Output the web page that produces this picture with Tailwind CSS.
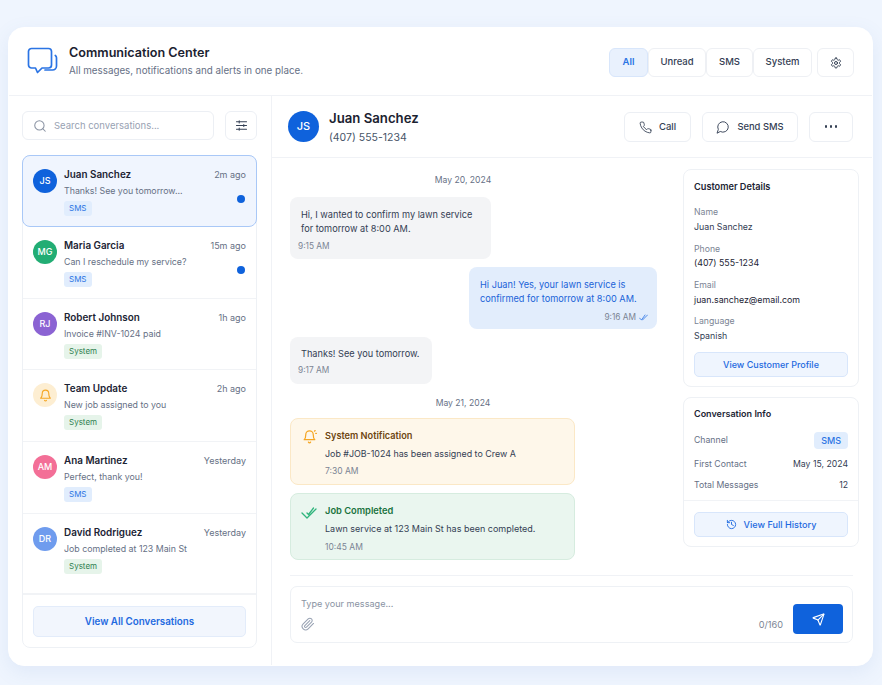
<!DOCTYPE html>
<html lang="en">
<head>
  <meta charset="UTF-8" />
  <meta name="viewport" content="width=device-width, initial-scale=1" />
  <title>Communication Center</title>
  <script src="https://cdn.jsdelivr.net/npm/@tailwindcss/browser@4"></script>
</head>
<body class="bg-[#eff5fe] font-['Inter',sans-serif] text-[#1c2434]">
<div class="w-[882px] h-[685px] pt-[27px] pl-[8px] overflow-hidden">
  <div class="w-[865px] h-[639px] bg-white rounded-[16px] border border-white shadow-[0_6px_20px_rgba(90,130,200,0.10)] flex flex-col overflow-hidden">

    <!-- Header -->
    <header class="h-[68px] shrink-0 border-b border-[#f0f2f6] flex items-center pl-[18px] pr-[18px]">
      <svg class="w-[32px] h-[30px] text-[#2b74e4]" viewBox="0 0 32 30" fill="none" stroke="currentColor" stroke-width="1.7" stroke-linecap="round" stroke-linejoin="round">
        <path d="M4.500 1.500h17a3 3 0 0 1 3 3v13.500a3 3 0 0 1-3 3H15l-4.500 4.500-2-4.500h-4a3 3 0 0 1-3-3V4.500a3 3 0 0 1 3-3z" />
        <path d="M28.300 8.500c.8.500 1.200 1.300 1.200 2.300v8.200a4 4 0 0 1-4 4h-7.500" />
      </svg>
      <div class="ml-[10px] pb-[1px]">
        <h1 class="text-[12.600px] leading-[18px] font-semibold text-[#1b2230]">Communication Center</h1>
        <p class="text-[9.800px] leading-[16px] mt-[1px] text-[#667085]">All messages, notifications and alerts in one place.</p>
      </div>
      <div class="ml-auto flex items-center pt-[2px]">
        <button class="h-[29px] w-[39px] rounded-[6px] border border-[#d8e6fb] bg-[#e9f1fd] text-[9.500px] font-semibold text-[#2b74e4]">All</button>
        <button class="h-[29px] w-[58px] rounded-[6px] border border-[#eef0f4] text-[9.500px] font-medium text-[#344054]">Unread</button>
        <button class="h-[29px] w-[47px] rounded-[6px] border border-[#eef0f4] text-[9.500px] font-medium text-[#344054]">SMS</button>
        <button class="h-[29px] w-[59px] rounded-[6px] border border-[#eef0f4] text-[9.500px] font-medium text-[#344054]">System</button>
        <button class="h-[29px] w-[37px] ml-[5px] rounded-[6px] border border-[#eef0f4] flex items-center justify-center text-[#344054]">
          <svg class="w-[12px] h-[12px]" viewBox="0 0 24 24" fill="none" stroke="currentColor" stroke-width="2" stroke-linecap="round" stroke-linejoin="round"><path d="M12.220 2h-.44a2 2 0 0 0-2 2v.18a2 2 0 0 1-1 1.730l-.43.25a2 2 0 0 1-2 0l-.15-.08a2 2 0 0 0-2.730.73l-.22.38a2 2 0 0 0 .73 2.730l.15.1a2 2 0 0 1 1 1.720v.51a2 2 0 0 1-1 1.740l-.15.09a2 2 0 0 0-.73 2.730l.22.38a2 2 0 0 0 2.730.73l.15-.08a2 2 0 0 1 2 0l.43.25a2 2 0 0 1 1 1.730V20a2 2 0 0 0 2 2h.44a2 2 0 0 0 2-2v-.18a2 2 0 0 1 1-1.730l.43-.25a2 2 0 0 1 2 0l.15.08a2 2 0 0 0 2.730-.73l.22-.39a2 2 0 0 0-.73-2.730l-.15-.08a2 2 0 0 1-1-1.740v-.5a2 2 0 0 1 1-1.740l.15-.09a2 2 0 0 0 .73-2.730l-.22-.38a2 2 0 0 0-2.730-.73l-.15.08a2 2 0 0 1-2 0l-.43-.25a2 2 0 0 1-1-1.730V4a2 2 0 0 0-2-2z"/><circle cx="12" cy="12" r="3"/></svg>
        </button>
      </div>
    </header>

    <div class="flex flex-1 min-h-0">
      <!-- Left column -->
      <aside class="w-[263px] shrink-0 border-r border-[#f0f2f6] pl-[13px] pr-[13px] pt-[15px] flex flex-col">
        <div class="flex gap-[11px]">
          <div class="w-[192px] h-[29px] rounded-[6px] border border-[#eceff4] flex items-center pl-[10px] text-[#8a93a3]">
            <svg class="w-[14px] h-[14px]" viewBox="0 0 24 24" fill="none" stroke="currentColor" stroke-width="1.800" stroke-linecap="round"><circle cx="11" cy="11" r="8"/><path d="m21 21-4.300-4.300"/></svg>
            <span class="ml-[7px] pt-[1px] text-[9.500px] text-[#98a2b3]">Search conversations...</span>
          </div>
          <button class="w-[32px] h-[29px] rounded-[6px] border border-[#eceff4] flex items-center justify-center text-[#344054]">
            <svg class="w-[11px] h-[11px]" viewBox="0 0 12 12" fill="none" stroke="currentColor" stroke-width="1.100" stroke-linecap="round"><path d="M.5 2h11M.5 6h11M.5 10h11M3.500.8v2.400M8.500 4.800v2.400M3.500 8.800v2.400"/></svg>
          </button>
        </div>

        <div class="mt-[15px] w-[235px] h-[493px] rounded-[8px] border border-[#eef1f5] flex flex-col relative">
          <div class="h-[72px] -m-px mb-0 rounded-[8px] border border-[#a9c8f7] bg-[#f0f5fe] flex pl-[10px] pr-[10px] pt-[12px] relative">
            <div class="w-[24px] h-[24px] rounded-full bg-[#0f62dc] text-white text-[9px] font-medium flex items-center justify-center shrink-0 mt-[1px]">JS</div>
            <div class="ml-[7px] flex-1">
              <div class="flex justify-between items-center h-[13px]"><span class="text-[9.900px] font-semibold text-[#1c2434]">Juan Sanchez</span><span class="text-[9px] text-[#667085]">2m ago</span></div>
              <p class="text-[8.800px] leading-[13px] mt-[3px] text-[#667085]">Thanks! See you tomorrow...</p>
              <span class="block w-fit mt-[4px] h-[15px] leading-[15px] px-[5px] rounded-[3px] bg-[#e1edfd] text-[8px] text-[#2b74e4]">SMS</span>
            </div>
            <span class="absolute right-[11px] top-[39px] w-[8px] h-[8px] rounded-full bg-[#0f62dc]"></span>
          </div>

          <div class="h-[72px] border-b border-[#f1f3f6] flex pl-[10px] pr-[10px] pt-[12px] relative">
            <div class="w-[24px] h-[24px] rounded-full bg-[#22ad74] text-white text-[9px] font-medium flex items-center justify-center shrink-0 mt-[1px]">MG</div>
            <div class="ml-[7px] flex-1">
              <div class="flex justify-between items-center h-[13px]"><span class="text-[9.900px] font-semibold text-[#1c2434]">Maria Garcia</span><span class="text-[9px] text-[#667085]">15m ago</span></div>
              <p class="text-[8.800px] leading-[13px] mt-[3px] text-[#667085]">Can I reschedule my service?</p>
              <span class="block w-fit mt-[4px] h-[15px] leading-[15px] px-[5px] rounded-[3px] bg-[#e1edfd] text-[8px] text-[#2b74e4]">SMS</span>
            </div>
            <span class="absolute right-[11px] top-[39px] w-[8px] h-[8px] rounded-full bg-[#0f62dc]"></span>
          </div>

          <div class="h-[71px] border-b border-[#f1f3f6] flex pl-[10px] pr-[10px] pt-[12px]">
            <div class="w-[24px] h-[24px] rounded-full bg-[#8b63d3] text-white text-[9px] font-medium flex items-center justify-center shrink-0 mt-[1px]">RJ</div>
            <div class="ml-[7px] flex-1">
              <div class="flex justify-between items-center h-[13px]"><span class="text-[9.900px] font-semibold text-[#1c2434]">Robert Johnson</span><span class="text-[9px] text-[#667085]">1h ago</span></div>
              <p class="text-[8.800px] leading-[13px] mt-[3px] text-[#667085]">Invoice #INV-1024 paid</p>
              <span class="block w-fit mt-[4px] h-[15px] leading-[15px] px-[5px] rounded-[3px] bg-[#e6f4ea] text-[8px] text-[#2f8050]">System</span>
            </div>
          </div>

          <div class="h-[72px] border-b border-[#f1f3f6] flex pl-[10px] pr-[10px] pt-[12px]">
            <div class="w-[24px] h-[24px] rounded-full bg-[#fdeed2] text-[#f5a623] flex items-center justify-center shrink-0 mt-[1px]">
              <svg class="w-[13px] h-[13px]" viewBox="0 0 24 24" fill="none" stroke="currentColor" stroke-width="2" stroke-linecap="round" stroke-linejoin="round"><path d="M6 8a6 6 0 0 1 12 0c0 7 3 9 3 9H3s3-2 3-9"/><path d="M10.300 21a1.940 1.940 0 0 0 3.400 0"/></svg>
            </div>
            <div class="ml-[7px] flex-1">
              <div class="flex justify-between items-center h-[13px]"><span class="text-[9.900px] font-semibold text-[#1c2434]">Team Update</span><span class="text-[9px] text-[#667085]">2h ago</span></div>
              <p class="text-[8.800px] leading-[13px] mt-[3px] text-[#667085]">New job assigned to you</p>
              <span class="block w-fit mt-[4px] h-[15px] leading-[15px] px-[5px] rounded-[3px] bg-[#e6f4ea] text-[8px] text-[#2f8050]">System</span>
            </div>
          </div>

          <div class="h-[72px] border-b border-[#f1f3f6] flex pl-[10px] pr-[10px] pt-[12px]">
            <div class="w-[24px] h-[24px] rounded-full bg-[#f36f97] text-white text-[9px] font-medium flex items-center justify-center shrink-0 mt-[1px]">AM</div>
            <div class="ml-[7px] flex-1">
              <div class="flex justify-between items-center h-[13px]"><span class="text-[9.900px] font-semibold text-[#1c2434]">Ana Martinez</span><span class="text-[9px] text-[#667085]">Yesterday</span></div>
              <p class="text-[8.800px] leading-[13px] mt-[3px] text-[#667085]">Perfect, thank you!</p>
              <span class="block w-fit mt-[4px] h-[15px] leading-[15px] px-[5px] rounded-[3px] bg-[#e1edfd] text-[8px] text-[#2b74e4]">SMS</span>
            </div>
          </div>

          <div class="h-[81px] border-b-2 border-[#f1f3f6] flex pl-[10px] pr-[10px] pt-[12px]">
            <div class="w-[24px] h-[24px] rounded-full bg-[#6f9cee] text-white text-[9px] font-medium flex items-center justify-center shrink-0 mt-[1px]">DR</div>
            <div class="ml-[7px] flex-1">
              <div class="flex justify-between items-center h-[13px]"><span class="text-[9.900px] font-semibold text-[#1c2434]">David Rodriguez</span><span class="text-[9px] text-[#667085]">Yesterday</span></div>
              <p class="text-[8.800px] leading-[13px] mt-[3px] text-[#667085]">Job completed at 123 Main St</p>
              <span class="block w-fit mt-[4px] h-[15px] leading-[15px] px-[5px] rounded-[3px] bg-[#e6f4ea] text-[8px] text-[#2f8050]">System</span>
            </div>
          </div>

          <div class="px-[10px] pt-[11px]">
            <button class="w-full h-[31px] pt-[2px] rounded-[5px] border border-[#e3ecfa] bg-[#f2f6fd] text-[9.800px] font-semibold text-[#1f6ae0]">View All Conversations</button>
          </div>
        </div>
      </aside>

      <!-- Main -->
      <main class="flex-1 min-w-0 flex flex-col">
        <div class="h-[62px] shrink-0 border-b border-[#f0f2f6] flex items-center pl-[16px] pr-[19px]">
          <div class="w-[31px] h-[31px] rounded-full bg-[#0f62dc] text-white text-[11px] font-medium flex items-center justify-center">JS</div>
          <div class="ml-[10px] pt-[1px]">
            <h2 class="text-[13.200px] leading-[18px] font-semibold text-[#1b2230]">Juan Sanchez</h2>
            <p class="text-[10.500px] leading-[14px] mt-[4px] text-[#475467]">(407) 555-1234</p>
          </div>
          <div class="ml-auto flex items-center gap-[11px]">
            <button class="h-[30px] w-[67px] pt-[1px] rounded-[6px] border border-[#eceff4] flex items-center justify-center gap-[7px] text-[9.500px] font-medium text-[#344054]">
              <svg class="w-[13px] h-[13px]" viewBox="0 0 24 24" fill="none" stroke="currentColor" stroke-width="1.600" stroke-linecap="round" stroke-linejoin="round"><path d="M22 16.920v3a2 2 0 0 1-2.180 2 19.790 19.790 0 0 1-8.630-3.070 19.500 19.500 0 0 1-6-6 19.790 19.790 0 0 1-3.070-8.670A2 2 0 0 1 4.110 2h3a2 2 0 0 1 2 1.720 12.840 12.840 0 0 0 .7 2.810 2 2 0 0 1-.45 2.110L8.090 9.910a16 16 0 0 0 6 6l1.270-1.270a2 2 0 0 1 2.110-.45 12.840 12.840 0 0 0 2.810.7A2 2 0 0 1 22 16.920z"/></svg>
              Call
            </button>
            <button class="h-[30px] w-[96px] pt-[1px] rounded-[6px] border border-[#eceff4] flex items-center justify-center gap-[7px] text-[9.400px] font-medium text-[#344054]">
              <svg class="w-[14px] h-[14px]" viewBox="0 0 24 24" fill="none" stroke="currentColor" stroke-width="1.600" stroke-linecap="round" stroke-linejoin="round"><path d="M7.900 20A9 9 0 1 0 4 16.100L2 22Z"/></svg>
              Send SMS
            </button>
            <button class="h-[30px] w-[44px] rounded-[6px] border border-[#eceff4] flex items-center justify-center gap-[2.500px]">
              <span class="w-[2.500px] h-[2.500px] rounded-full bg-[#344054]"></span><span class="w-[2.500px] h-[2.500px] rounded-full bg-[#344054]"></span><span class="w-[2.500px] h-[2.500px] rounded-full bg-[#344054]"></span>
            </button>
          </div>
        </div>

        <div class="flex-1 min-h-0 flex">
          <!-- Conversation -->
          <div class="w-[411px] shrink-0 pl-[18px] flex flex-col">
            <div class="w-[367px]">
              <p class="text-center text-[8.600px] leading-[12px] mt-[16px] pr-[21px] text-[#667085]">May 20, 2024</p>
              <div class="mt-[11px] w-[201px] h-[62px] rounded-[8px] bg-[#f3f4f6] pl-[8px] pt-[11px]">
                <p class="text-[9.200px] leading-[14px] pl-[3px] text-[#344054]">Hi, I wanted to confirm my lawn service<br />for tomorrow at 8:00 AM.</p>
                <p class="text-[8.300px] leading-[12px] mt-[4px] text-[#7b8494]">9:15 AM</p>
              </div>
              <div class="mt-[8px] ml-auto w-[188px] h-[62px] rounded-[8px] bg-[#e2edfc] px-[11px] pt-[11px]">
                <p class="text-[9.200px] leading-[14px] text-[#1a63d8]">Hi Juan! Yes, your lawn service is<br />confirmed for tomorrow at 8:00 AM.</p>
                <p class="text-[8.300px] leading-[12px] mt-[5px] text-[#7b8494] flex justify-end items-center gap-[3px] -mr-[2px]">9:16 AM
                  <svg class="w-[9px] h-[7px] text-[#2b74e4]" viewBox="0 0 9 7" fill="none" stroke="currentColor" stroke-width="0.800" stroke-linecap="round" stroke-linejoin="round"><path d="M.5 4l2 2L6 1M3.500 6L8.500 1"/></svg>
                </p>
              </div>
              <div class="mt-[8px] w-[142px] h-[47px] rounded-[8px] bg-[#f3f4f6] pl-[8px] pt-[10px]">
                <p class="text-[9.200px] leading-[14px] pl-[3px] text-[#344054]">Thanks! See you tomorrow.</p>
                <p class="text-[8.300px] leading-[12px] mt-[3px] text-[#7b8494]">9:17 AM</p>
              </div>
              <p class="text-center text-[8.600px] leading-[12px] mt-[13px] pr-[21px] text-[#667085]">May 21, 2024</p>
              <div class="mt-[9px] w-[285px] h-[67px] rounded-[8px] border border-[#fbe8c6] bg-[#fef7ea] flex pl-[11px] pt-[10px]">
                <svg class="w-[15px] h-[15px] text-[#f5a623] shrink-0" viewBox="0 0 24 24" fill="none" stroke="currentColor" stroke-width="2" stroke-linecap="round" stroke-linejoin="round"><path d="M6 9a6 6 0 0 1 12 0c0 6 2.500 8 2.500 8h-17S6 15 6 9"/><path d="M10.300 21a1.940 1.940 0 0 0 3.400 0"/><path d="M20 3.500l1-1M22 7h1"/></svg>
                <div class="ml-[8px]">
                  <p class="text-[9.200px] leading-[13px] font-semibold text-[#6d4510]">System Notification</p>
                  <p class="text-[8.900px] leading-[13px] mt-[5px] text-[#344054]">Job #JOB-1024 has been assigned to Crew A</p>
                  <p class="text-[8.500px] leading-[12px] mt-[5px] text-[#7b8494]">7:30 AM</p>
                </div>
              </div>
              <div class="mt-[8px] w-[285px] h-[67px] rounded-[8px] border border-[#d6ecdf] bg-[#eaf6ef] flex pl-[10px] pt-[10px]">
                <svg class="w-[16px] h-[14px] mt-[2px] text-[#2fb47c] shrink-0" viewBox="0 0 16 14" fill="none" stroke="currentColor" stroke-width="1.300" stroke-linecap="round" stroke-linejoin="round"><path d="M1 7l5 5 9-9M6 7l1.500 1.500L12.500 2"/></svg>
                <div class="ml-[8px]">
                  <p class="text-[9.300px] leading-[13px] font-semibold text-[#1a7340]">Job Completed</p>
                  <p class="text-[9px] leading-[13px] mt-[5px] text-[#344054]">Lawn service at 123 Main St has been completed.</p>
                  <p class="text-[8.500px] leading-[12px] mt-[6px] text-[#7b8494]">10:45 AM</p>
                </div>
              </div>
            </div>
          </div>

          <!-- Details -->
          <div class="w-[176px] shrink-0 pt-[11px] flex flex-col gap-[10px]">
            <section class="h-[218px] rounded-[8px] border border-[#eef1f5] px-[10px] pt-[10px]">
              <h3 class="text-[9.200px] leading-[13px] font-semibold text-[#1c2434]">Customer Details</h3>
              <p class="text-[8.700px] leading-[12px] mt-[13px] text-[#7b8494]">Name</p>
              <p class="text-[8.800px] leading-[13px] mt-[2px] text-[#344054]">Juan Sanchez</p>
              <p class="text-[8.700px] leading-[12px] mt-[10px] text-[#7b8494]">Phone</p>
              <p class="text-[8.800px] leading-[13px] mt-[1px] text-[#1c2434]">(407) 555-1234</p>
              <p class="text-[8.700px] leading-[12px] mt-[10px] text-[#7b8494]">Email</p>
              <p class="text-[8.800px] leading-[13px] mt-[2px] text-[#1c2434]">juan.sanchez@email.com</p>
              <p class="text-[8.700px] leading-[12px] mt-[9px] text-[#7b8494]">Language</p>
              <p class="text-[8.800px] leading-[13px] mt-[2px] text-[#344054]">Spanish</p>
              <button class="w-full h-[25px] mt-[10px] rounded-[5px] border border-[#d8e6fb] bg-[#eff5fe] text-[9px] font-medium text-[#1f6ae0]">View Customer Profile</button>
            </section>
            <section class="h-[150px] rounded-[8px] border border-[#eef1f5]">
              <div class="h-[103px] border-b border-[#f1f3f6] px-[10px] pt-[9px]">
                <h3 class="text-[9px] leading-[13px] font-semibold text-[#1c2434]">Conversation Info</h3>
                <div class="flex justify-between items-center mt-[12px] h-[17px]"><span class="text-[8.700px] text-[#667085]">Channel</span><span class="h-[17px] leading-[17px] px-[7px] rounded-[4px] bg-[#e1edfd] text-[9px] font-medium text-[#2b74e4]">SMS</span></div>
                <div class="flex justify-between items-center mt-[7px] h-[17px]"><span class="text-[8.700px] text-[#667085]">First Contact</span><span class="text-[8.700px] text-[#344054]">May 15, 2024</span></div>
                <div class="flex justify-between items-center mt-[4px] h-[17px]"><span class="text-[8.700px] text-[#667085]">Total Messages</span><span class="text-[8.700px] text-[#344054]">12</span></div>
              </div>
              <div class="px-[10px] pt-[11px]">
                <button class="w-full h-[25px] rounded-[5px] border border-[#d8e6fb] bg-[#eff5fe] flex items-center justify-center gap-[7px] text-[9.100px] font-medium text-[#1f6ae0]">
                  <svg class="w-[11px] h-[11px]" viewBox="0 0 24 24" fill="none" stroke="currentColor" stroke-width="2" stroke-linecap="round" stroke-linejoin="round"><path d="M3 12a9 9 0 1 0 9-9 9.750 9.750 0 0 0-6.740 2.740L3 8"/><path d="M3 3v5h5"/><path d="M12 7v5l4 2"/></svg>
                  View Full History
                </button>
              </div>
            </section>
          </div>
        </div>

        <!-- Composer -->
        <div class="shrink-0 pl-[18px] pr-[19px] pb-[22px]">
          <div class="border-t border-[#f0f2f6] pt-[10px]">
            <div class="h-[57px] rounded-[7px] border border-[#eef1f5] flex justify-between pl-[10px] pr-[9px] relative">
              <div class="pt-[10px]">
                <p class="text-[9.100px] leading-[13px] text-[#8a93a3]">Type your message...</p>
                <svg class="w-[14px] h-[14px] mt-[7px] text-[#98a2b3]" viewBox="0 0 24 24" fill="none" stroke="currentColor" stroke-width="1.800" stroke-linecap="round" stroke-linejoin="round"><path d="m21.440 11.050-9.190 9.190a6 6 0 0 1-8.490-8.490l8.570-8.570A4 4 0 1 1 18 8.840l-8.590 8.570a2 2 0 0 1-2.830-2.830l8.490-8.480"/></svg>
              </div>
              <div class="flex items-end pb-[8px] gap-[10px]">
                <span class="text-[9.200px] leading-[12px] mb-[3px] text-[#7b8494]">0/160</span>
                <button class="w-[50px] h-[30px] rounded-[4px] bg-[#0f62dc] flex items-center justify-center text-white">
                  <svg class="w-[13px] h-[13px]" viewBox="0 0 24 24" fill="none" stroke="currentColor" stroke-width="2" stroke-linecap="round" stroke-linejoin="round"><path d="M14.536 21.686a.5.5 0 0 0 .937-.024l6.500-19a.496.496 0 0 0-.635-.635l-19 6.500a.5.5 0 0 0-.024.937l7.930 3.180a2 2 0 0 1 1.112 1.110z"/><path d="m21.854 2.147-10.940 10.939"/></svg>
                </button>
              </div>
            </div>
          </div>
        </div>
      </main>
    </div>
  </div>
</div>
</body>
</html>
